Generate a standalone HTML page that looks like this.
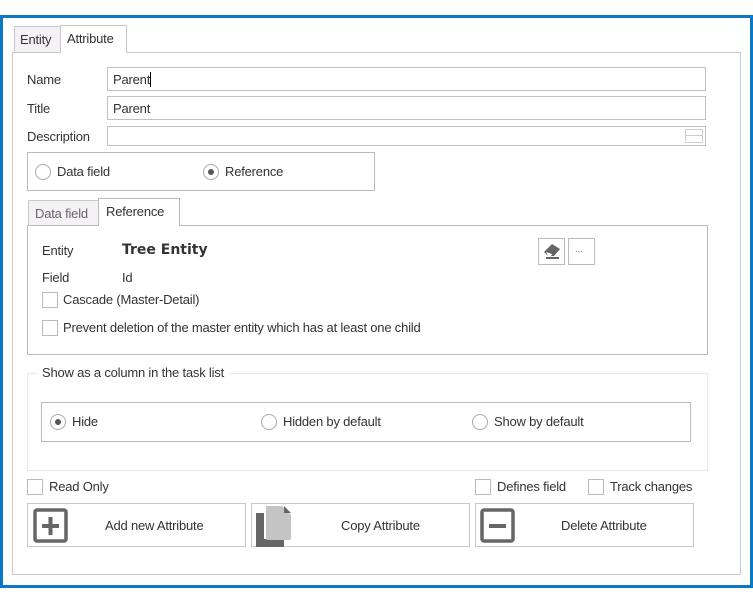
<!DOCTYPE html>
<html><head><style>
*{box-sizing:border-box;margin:0;padding:0}
body{width:753px;height:603px;background:#fff;position:relative;overflow:hidden;font-family:"Liberation Sans",sans-serif;font-size:13px;color:#333}
.a{position:absolute}
.frame{left:0;top:15px;width:753px;height:573px;border:3px solid #0a78c4;background:#fff}
.box{border:1px solid #c8c8c8;background:#fff}
.lbl{font-size:13px;color:#333;white-space:nowrap;letter-spacing:-0.2px}
.cb{width:16px;height:16px;border:1px solid #bbb;background:#fff}
.rd{width:16px;height:16px;border:1px solid #aaa;border-radius:50%;background:#fff}
.rd.on::after{content:"";position:absolute;left:4px;top:4px;width:6px;height:6px;border-radius:50%;background:#555}
.btn{border:1px solid #c8c8c8;background:#fff;height:44px}
</style></head><body>
<div class="a frame"></div>
<div class="a box" style="left:14px;top:26px;width:47px;height:27px;background:#f4f2f4;"></div>
<div class="a lbl" style="left:20px;top:32px">Entity</div>
<div class="a box" style="left:12px;top:52px;width:729px;height:523px"></div>
<div class="a" style="left:60px;top:25px;width:67px;height:28px;border:1px solid #c8c8c8;border-bottom:none;background:#fff"></div>
<div class="a lbl" style="left:67px;top:31px">Attribute</div>

<div class="a lbl" style="left:27px;top:72px">Name</div>
<div class="a box" style="left:107px;top:67px;width:599px;height:24px;border-color:#c0c0c0"></div>
<div class="a lbl" style="left:113px;top:72px">Parent<span style="border-left:1px solid #000"> </span></div>
<div class="a lbl" style="left:27px;top:101px">Title</div>
<div class="a box" style="left:107px;top:96px;width:599px;height:24px;border-color:#c0c0c0"></div>
<div class="a lbl" style="left:113px;top:101px">Parent</div>
<div class="a lbl" style="left:27px;top:129px">Description</div>
<div class="a box" style="left:107px;top:126px;width:599px;height:20px;border-color:#c0c0c0"></div>
<div class="a" style="left:685px;top:129px;width:18px;height:14px;border:1px solid #ccc;background:#fff"></div>
<div class="a" style="left:685px;top:135px;width:18px;height:1px;background:#ccc"></div>

<div class="a box" style="left:27px;top:152px;width:348px;height:39px;border-color:#bbb"></div>
<div class="a rd" style="left:35px;top:164px"></div>
<div class="a lbl" style="left:57px;top:164px">Data field</div>
<div class="a rd on" style="left:203px;top:164px"></div>
<div class="a lbl" style="left:225px;top:164px">Reference</div>

<div class="a box" style="left:28px;top:200px;width:71px;height:26px;background:#f4f2f4"></div>
<div class="a lbl" style="left:35px;top:206px;color:#666">Data field</div>
<div class="a box" style="left:27px;top:225px;width:681px;height:130px;border-color:#bbb"></div>
<div class="a" style="left:98px;top:198px;width:82px;height:28px;border:1px solid #bbb;border-bottom:none;background:#fff"></div>
<div class="a lbl" style="left:106px;top:204px">Reference</div>

<div class="a lbl" style="left:42px;top:243px">Entity</div>
<div class="a" style="left:122px;top:242px;font-family:'DejaVu Sans',sans-serif;font-weight:bold;font-size:14px;color:#333">Tree Entity</div>
<div class="a box" style="left:538px;top:238px;width:27px;height:27px;border-color:#bbb"></div>
<svg class="a" style="left:542px;top:243px" width="20" height="17" viewBox="0 0 20 17"><path d="M10 1 L18 6 L12 13 L6 13 L2 9 Z" fill="#666"/><path d="M4 9 L10 11 L9 13 L6 13 Z" fill="#fff"/><rect x="4" y="14" width="13" height="2" fill="#666"/></svg>
<div class="a box" style="left:568px;top:238px;width:27px;height:27px;border-color:#bbb"></div>
<div class="a lbl" style="left:575px;top:244px;font-size:10px;color:#888">...</div>
<div class="a lbl" style="left:42px;top:270px">Field</div>
<div class="a lbl" style="left:122px;top:270px">Id</div>
<div class="a cb" style="left:42px;top:292px"></div>
<div class="a lbl" style="left:63px;top:292px">Cascade (Master-Detail)</div>
<div class="a cb" style="left:42px;top:320px"></div>
<div class="a lbl" style="left:63px;top:320px">Prevent deletion of the master entity which has at least one child</div>

<div class="a" style="left:27px;top:373px;width:681px;height:98px;border:1px solid #e8e8e8"></div>
<div class="a lbl" style="left:37px;top:365px;background:#fff;padding:0 5px">Show as a column in the task list</div>
<div class="a box" style="left:41px;top:402px;width:650px;height:40px;border-color:#bbb"></div>
<div class="a rd on" style="left:50px;top:414px"></div>
<div class="a lbl" style="left:72px;top:414px">Hide</div>
<div class="a rd" style="left:261px;top:414px"></div>
<div class="a lbl" style="left:283px;top:414px">Hidden by default</div>
<div class="a rd" style="left:472px;top:414px"></div>
<div class="a lbl" style="left:494px;top:414px">Show by default</div>

<div class="a cb" style="left:27px;top:479px"></div>
<div class="a lbl" style="left:49px;top:479px">Read Only</div>
<div class="a cb" style="left:475px;top:479px"></div>
<div class="a lbl" style="left:497px;top:479px">Defines field</div>
<div class="a cb" style="left:588px;top:479px"></div>
<div class="a lbl" style="left:610px;top:479px">Track changes</div>

<div class="a btn" style="left:27px;top:503px;width:219px"></div>
<svg class="a" style="left:33px;top:508px" width="36" height="36"><rect x="2" y="2" width="31" height="31" rx="2" fill="none" stroke="#666" stroke-width="3.5"/><rect x="9" y="16" width="17" height="4" fill="#666"/><rect x="15.5" y="9" width="4" height="18" fill="#666"/></svg>
<div class="a lbl" style="left:105px;top:518px">Add new Attribute</div>
<div class="a btn" style="left:251px;top:503px;width:219px"></div>
<svg class="a" style="left:256px;top:505px" width="40" height="42"><path d="M0 8 H8 V34 H28 V42 H0 Z" fill="#666"/><path d="M10 1 H26 L35 10 V33 Q35 35 33 35 H12 Q10 35 10 33 Z" fill="#c4c4c4"/><path d="M28 1 L35 8 H28 Z" fill="#666"/></svg>
<div class="a lbl" style="left:341px;top:518px">Copy Attribute</div>
<div class="a btn" style="left:475px;top:503px;width:219px"></div>
<svg class="a" style="left:480px;top:508px" width="36" height="36"><rect x="2" y="2" width="31" height="31" rx="2" fill="none" stroke="#666" stroke-width="3.5"/><rect x="9" y="16" width="17" height="4" fill="#666"/></svg>
<div class="a lbl" style="left:561px;top:518px">Delete Attribute</div>
</body></html>
